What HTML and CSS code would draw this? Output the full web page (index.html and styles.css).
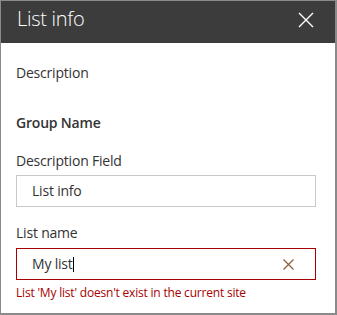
FILE: index.html
```html
<!DOCTYPE html>
<html lang="en">
<head>
  <meta charset="UTF-8">
  <meta name="viewport" content="width=device-width, initial-scale=1.0">
  <title>List info</title>
  <link rel="stylesheet" href="styles.css">
</head>
<body>
  <div class="panel">
    <div class="panel-header">
      <h1 class="panel-title">List info</h1>
      <svg class="close" width="16" height="16" viewBox="0 0 16 16">
        <path d="M1 1 L15 15 M15 1 L1 15" stroke="#fff" stroke-width="1.4" fill="none"/>
      </svg>
    </div>
    <div class="panel-body">
      <p class="desc">Description</p>
      <p class="group">Group Name</p>
      <div class="field">
        <label class="label">Description Field</label>
        <div class="input">List info</div>
      </div>
      <div class="field field-name">
        <label class="label">List name</label>
        <div class="input input-error">
          <span>My list<span class="caret"></span></span>
          <svg class="clear" width="11" height="11" viewBox="0 0 11 11">
            <path d="M0.5 0.5 L10.5 10.5 M10.5 0.5 L0.5 10.5" stroke="#8c5a3c" stroke-width="1.2" fill="none"/>
          </svg>
        </div>
        <p class="error">List 'My list' doesn't exist in the current site</p>
      </div>
    </div>
  </div>
</body>
</html>
```

FILE: styles.css
```css
body {
  margin: 0;
  font-family: "Open Sans", "Noto Sans", sans-serif;
  color: #333;
  background: #fff;
  letter-spacing: -0.2px;
}
.panel {
  width: 337px;
  height: 315px;
  box-sizing: border-box;
  border: 1px solid #8a8a8a;
  border-right-width: 2px;
  border-bottom-width: 2px;
}
.panel-header {
  height: 42px;
  background: #3c3c3c;
  display: flex;
  align-items: flex-start;
  justify-content: space-between;
  padding: 0 21px 0 16px;
}
.panel-title {
  margin: 4px 0 0 0;
  font-size: 20px;
  font-weight: 300;
  line-height: 28px;
  color: #fff;
  letter-spacing: -0.3px;
}
.close {
  margin-top: 11px;
}
.panel-body {
  padding: 20px 15px 0 15px;
}
p {
  margin: 0;
}
.desc {
  font-size: 14px;
  line-height: 20px;
}
.group {
  margin-top: 30px;
  font-size: 14px;
  line-height: 20px;
  font-weight: 600;
}
.field {
  margin-top: 18px;
}
.field-name {
  margin-top: 16px;
}
.label {
  display: block;
  font-size: 14px;
  line-height: 20px;
  margin-bottom: 4px;
}
.field-name .label {
  margin-bottom: 5px;
}
.input {
  width: 300px;
  height: 32px;
  box-sizing: border-box;
  border: 1px solid #c8c8c8;
  padding: 0 21px 0 15px;
  font-size: 14px;
  line-height: 30px;
  display: flex;
  align-items: center;
  justify-content: space-between;
}
.input-error {
  border-color: #a80000;
}
.caret {
  display: inline-block;
  width: 1px;
  height: 15px;
  background: #000;
  vertical-align: -3px;
}
.error {
  margin-top: 5px;
  font-size: 12px;
  line-height: 16px;
  color: #a80000;
}
```
